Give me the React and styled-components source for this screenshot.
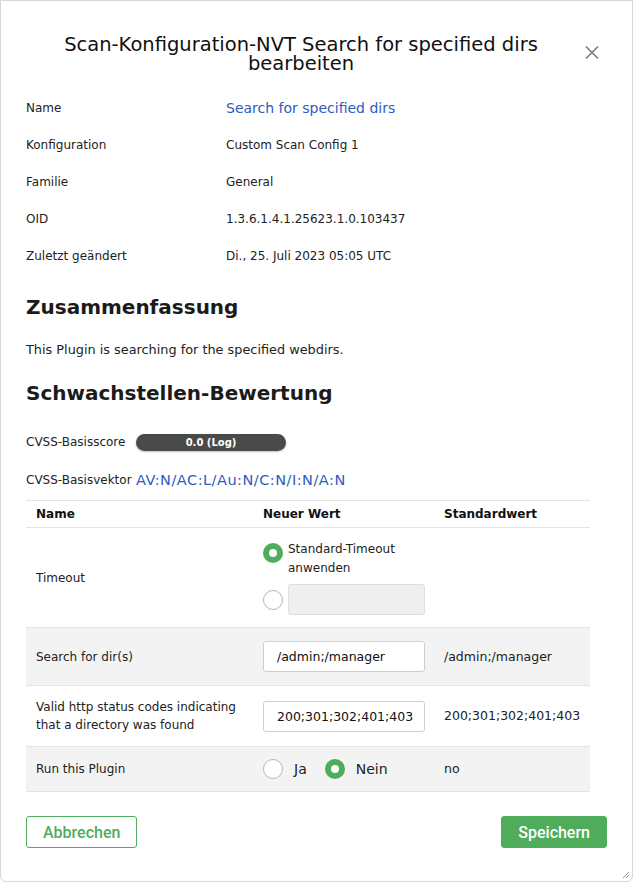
import React from 'react';
import styled, { createGlobalStyle } from 'styled-components';

const GlobalStyle = createGlobalStyle`
  html, body {
    margin: 0;
    padding: 0;
    background: #fff;
  }
  body {
    font-family: 'DejaVu Sans', sans-serif;
    color: #222;
  }
`;

const green = '#4fac5b';
const link = '#2e5bbf';

const Dialog = styled.div`
  position: relative;
  box-sizing: border-box;
  width: 633px;
  height: 882px;
  border: 1px solid #d6d6d6;
  border-radius: 0 0 6px 6px;
  background: #fff;
  display: flex;
  flex-direction: column;
`;

const Header = styled.div`
  display: flex;
  align-items: flex-start;
  padding: 34px 33px 0 26px;
`;

const Title = styled.h1`
  flex: 1;
  margin: 0;
  font-size: 19.5px;
  font-weight: normal;
  line-height: 19px;
  text-align: center;
  color: #111;
`;

const Close = styled.button`
  border: 0;
  background: none;
  padding: 0;
  margin: 10px 0 0 10px;
  width: 14px;
  height: 15px;
  cursor: pointer;
  display: flex;
`;

const Body = styled.div`
  flex: 1;
  padding: 0 42px 0 25px;
`;

const InfoGrid = styled.div`
  display: grid;
  grid-template-columns: 200px 1fr;
  grid-auto-rows: 37px;
  align-items: center;
  margin-top: 16px;
  font-size: 12px;
  color: #222;
`;

const Value = styled.span`
  color: ${props => (props.$link ? link : '#222')};
  font-size: ${props => (props.$link ? '14px' : '12px')};
`;

const Heading = styled.h2`
  margin: ${props => props.$top}px 0 0;
  font-size: 20px;
  font-weight: bold;
  color: #1b1b1b;
  line-height: 24px;
`;

const Summary = styled.p`
  margin: 22px 0 0;
  font-size: 12.85px;
  line-height: 18px;
  color: #222;
`;

const CvssRow = styled.div`
  display: flex;
  align-items: center;
  font-size: 12px;
  height: 20px;
  margin-top: ${props => props.$top}px;
`;

const CvssLabel = styled.span`
  width: 110px;
  flex: none;
`;

const ScoreBar = styled.div`
  width: 150px;
  height: 17px;
  border-radius: 9px;
  background: #4a4a4a;
  color: #fff;
  font-size: 10px;
  font-weight: bold;
  display: flex;
  align-items: center;
  justify-content: center;
  box-shadow: 0 1px 2px rgba(0, 0, 0, 0.25);
`;

const Vector = styled.span`
  color: ${link};
  font-size: 14.5px;
  letter-spacing: 0.5px;
`;

const Table = styled.div`
  margin-top: 10px;
  border-top: 1px solid #e4e4e4;
  font-size: 12px;
`;

const Row = styled.div`
  display: grid;
  grid-template-columns: 227px 181px 1fr;
  align-items: center;
  min-height: ${props => props.$h}px;
  padding-left: 10px;
  background: ${props => (props.$alt ? '#f3f3f3' : '#fff')};
  border-bottom: 1px solid #e4e4e4;
  box-sizing: border-box;
`;

const HeadCell = styled.div`
  font-weight: bold;
  font-size: 12px;
  color: #111;
`;

const Cell = styled.div`
  line-height: 18px;
  color: #222;
  font-size: ${props => (props.$default ? '12.5px' : '12px')};
`;

const Options = styled.div`
  display: flex;
  flex-direction: column;
  gap: 6px;
`;

const Option = styled.label`
  display: flex;
  align-items: ${props => (props.$top ? 'flex-start' : 'center')};
  gap: 5px;
  font-size: 12px;
  line-height: 19px;
`;

const Radio = styled.span`
  flex: none;
  box-sizing: border-box;
  width: 20px;
  height: 20px;
  border-radius: 50%;
  margin-top: ${props => (props.$top ? '3px' : '0')};
  background: ${props => (props.$checked ? green : '#fff')};
  border: ${props => (props.$checked ? 'none' : '1px solid #b5b5b5')};
  display: flex;
  align-items: center;
  justify-content: center;
  &::after {
    content: '';
    display: ${props => (props.$checked ? 'block' : 'none')};
    width: 8px;
    height: 8px;
    border-radius: 50%;
    background: #fff;
  }
`;

const Input = styled.div`
  box-sizing: border-box;
  width: ${props => props.$w || 162}px;
  height: 31px;
  border: 1px solid ${props => (props.$disabled ? '#dedede' : '#cfcfcf')};
  border-radius: 3px;
  background: ${props => (props.$disabled ? '#efefef' : '#fff')};
  display: flex;
  align-items: center;
  padding-left: 13px;
  font-size: 12.5px;
  color: #111;
`;

const Choice = styled.div`
  display: flex;
  align-items: center;
  font-size: 14px;
`;

const ChoiceText = styled.span`
  margin: 0 18px 0 11px;
`;

const Footer = styled.div`
  display: flex;
  justify-content: space-between;
  padding: 0 25px 33px 25px;
`;

const Button = styled.button`
  font-family: Roboto, 'Liberation Sans', sans-serif;
  font-size: 16px;
  font-weight: 500;
  height: 32px;
  padding: 0 16px;
  border-radius: 3px;
  border: 1px solid ${green};
  background: ${props => (props.$primary ? green : '#fff')};
  color: ${props => (props.$primary ? '#fff' : green)};
  cursor: pointer;
`;

const Grip = styled.svg`
  position: absolute;
  right: 2px;
  bottom: 2px;
`;

const info = [
  ['Name', 'Search for specified dirs', true],
  ['Konfiguration', 'Custom Scan Config 1'],
  ['Familie', 'General'],
  ['OID', '1.3.6.1.4.1.25623.1.0.103437'],
  ['Zuletzt geändert', 'Di., 25. Juli 2023 05:05 UTC'],
];

const App = () => (
  <>
    <GlobalStyle />
    <Dialog>
      <Header>
        <Title>Scan-Konfiguration-NVT Search for specified dirs bearbeiten</Title>
        <Close aria-label="close">
          <svg width="14" height="15" viewBox="0 0 14 15">
            <path d="M1 1.5 L13 13.5 M13 1.5 L1 13.5" stroke="#777" strokeWidth="1.5" />
          </svg>
        </Close>
      </Header>
      <Body>
        <InfoGrid>
          {info.map(([k, v, isLink]) => (
            <React.Fragment key={k}>
              <span>{k}</span>
              <Value $link={isLink}>{v}</Value>
            </React.Fragment>
          ))}
        </InfoGrid>
        <Heading $top={21}>Zusammenfassung</Heading>
        <Summary>This Plugin is searching for the specified webdirs.</Summary>
        <Heading $top={22}>Schwachstellen-Bewertung</Heading>
        <CvssRow $top={27}>
          <CvssLabel>CVSS-Basisscore</CvssLabel>
          <ScoreBar>0.0 (Log)</ScoreBar>
        </CvssRow>
        <CvssRow $top={18}>
          <CvssLabel>CVSS-Basisvektor</CvssLabel>
          <Vector>AV:N/AC:L/Au:N/C:N/I:N/A:N</Vector>
        </CvssRow>
        <Table>
          <Row $h={27}>
            <HeadCell>Name</HeadCell>
            <HeadCell>Neuer Wert</HeadCell>
            <HeadCell>Standardwert</HeadCell>
          </Row>
          <Row $h={100}>
            <Cell>Timeout</Cell>
            <Options>
              <Option $top>
                <Radio $checked $top />
                <span>Standard-Timeout<br />anwenden</span>
              </Option>
              <Option>
                <Radio />
                <Input $disabled $w={137} />
              </Option>
            </Options>
            <Cell />
          </Row>
          <Row $h={58} $alt>
            <Cell>Search for dir(s)</Cell>
            <Input>/admin;/manager</Input>
            <Cell $default>/admin;/manager</Cell>
          </Row>
          <Row $h={61}>
            <Cell>Valid http status codes indicating<br />that a directory was found</Cell>
            <Input>200;301;302;401;403</Input>
            <Cell $default>200;301;302;401;403</Cell>
          </Row>
          <Row $h={45} $alt>
            <Cell>Run this Plugin</Cell>
            <Choice>
              <Radio />
              <ChoiceText>Ja</ChoiceText>
              <Radio $checked />
              <ChoiceText>Nein</ChoiceText>
            </Choice>
            <Cell $default>no</Cell>
          </Row>
        </Table>
      </Body>
      <Footer>
        <Button>Abbrechen</Button>
        <Button $primary>Speichern</Button>
      </Footer>
      <Grip width="10" height="10" viewBox="0 0 10 10">
        <path d="M9 3 L3 9 M9 6 L6 9" stroke="#999" strokeWidth="1" />
      </Grip>
    </Dialog>
  </>
);

export default App;
